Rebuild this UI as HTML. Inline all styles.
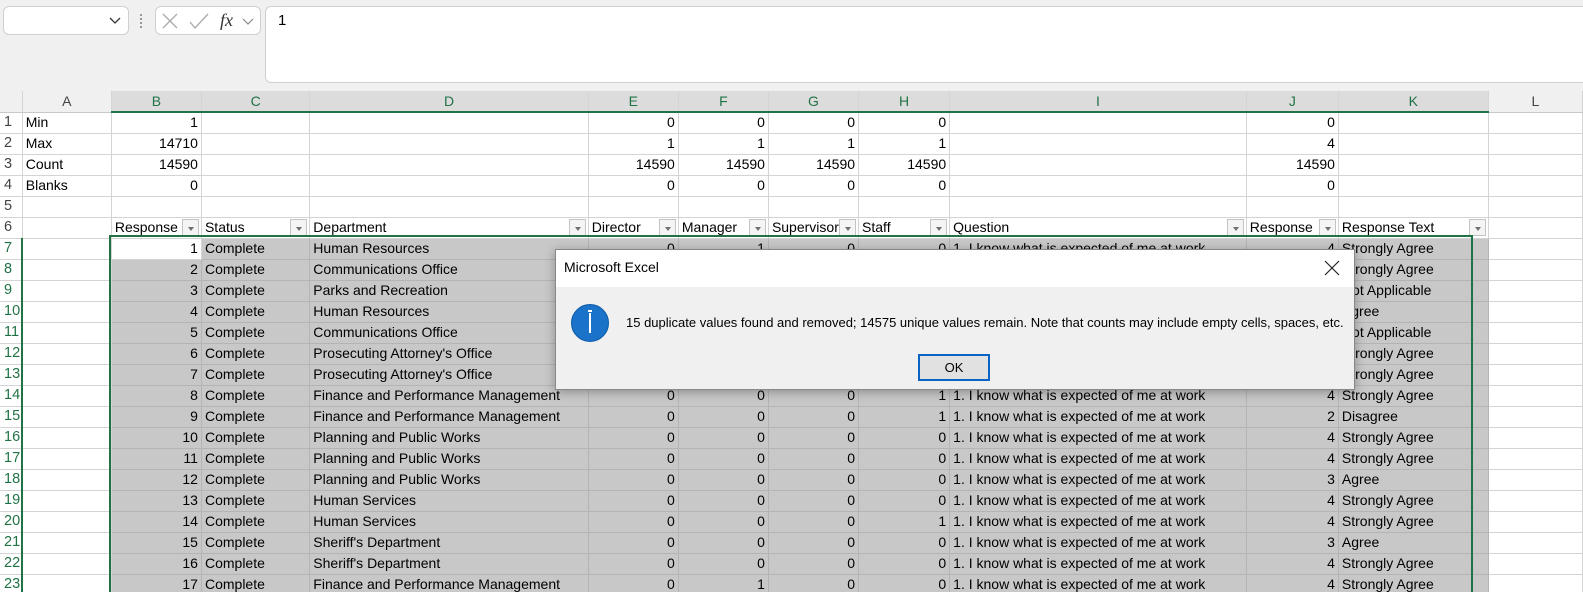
<!DOCTYPE html>
<html><head><meta charset="utf-8">
<style>
*{box-sizing:border-box;margin:0;padding:0}
html,body{width:1583px;height:592px;overflow:hidden}
body{background:#f0f0f0;font-family:"Liberation Sans",sans-serif;position:relative}
.box{position:absolute;background:#fff;border:1px solid #d0d0d0;border-radius:6px}
#grid{position:absolute;left:0;top:91px;width:1583px;border-collapse:collapse;table-layout:fixed;font-size:14px;color:#000}
#grid td{border-right:1px solid #d4d4d4;border-bottom:1px solid #d4d4d4;height:21px;padding:0 3px;white-space:nowrap;overflow:hidden;background:#fff;line-height:19px}
#grid tr.h td{background:#f0f0f0;text-align:center;color:#444;height:21px;border-bottom:1px solid #c8c8c8}
#grid tr.h td.s{background:#dcdcdc;color:#217346;border-bottom:2px solid #217346}
#grid td.rh{color:#444;padding-left:4px;background:#fff;font-size:14.5px}
#grid td.rg{color:#217346;border-right:2px solid #217346}
#grid td.g{background:#c8c8c8;border-right-color:#b4b4b4;border-bottom-color:#b4b4b4}
.r{text-align:right}
.f{position:relative}
.f i{position:absolute;right:2px;top:1px;width:17px;height:17px;border:1px solid #c4c4c4;background:#f4f4f4}
.f i:after{content:"";position:absolute;left:5px;top:7px;border-left:3px solid transparent;border-right:3px solid transparent;border-top:4px solid #707070}
</style></head><body>
<div class="box" style="left:3px;top:6px;width:126px;height:29px"></div>
<svg style="position:absolute;left:108px;top:16px" width="14" height="10"><path d="M2 2 L7 7 L12 2" stroke="#333" stroke-width="1.3" fill="none"/></svg>
<div style="position:absolute;left:140px;top:14px;width:3px;height:14px;border-left:2px dotted #999"></div>
<div class="box" style="left:155px;top:6px;width:106px;height:29px"></div>
<svg style="position:absolute;left:160px;top:10px" width="100" height="22"><path d="M3 4 L17 18 M17 4 L3 18" stroke="#aaa" stroke-width="1.3"/><path d="M30 12 L35 18 L48 4" stroke="#aaa" stroke-width="1.3" fill="none"/><text x="60" y="16" font-family="Liberation Serif" font-style="italic" font-size="18" fill="#333">fx</text><path d="M83 9 L88 14 L93 9" stroke="#888" stroke-width="1.2" fill="none"/></svg>
<div class="box" style="left:265px;top:6px;width:1330px;height:77px"></div>
<div style="position:absolute;left:278px;top:12px;font-size:15px">1</div>

<table id="grid">
<colgroup><col style="width:22px"><col style="width:88px"><col style="width:89px"><col style="width:107px"><col style="width:275px"><col style="width:89px"><col style="width:89px"><col style="width:89px"><col style="width:90px"><col style="width:293px"><col style="width:91px"><col style="width:148px"><col style="width:93px"></colgroup>
<tr class="h"><td style="background:#f0f0f0"></td><td>A</td><td class="s">B</td><td class="s">C</td><td class="s">D</td><td class="s">E</td><td class="s">F</td><td class="s">G</td><td class="s">H</td><td class="s">I</td><td class="s">J</td><td class="s">K</td><td>L</td></tr>
<tr><td class="rh">1</td><td>Min</td><td class="r">1</td><td></td><td></td><td class="r">0</td><td class="r">0</td><td class="r">0</td><td class="r">0</td><td></td><td class="r">0</td><td></td><td></td></tr>
<tr><td class="rh">2</td><td>Max</td><td class="r">14710</td><td></td><td></td><td class="r">1</td><td class="r">1</td><td class="r">1</td><td class="r">1</td><td></td><td class="r">4</td><td></td><td></td></tr>
<tr><td class="rh">3</td><td>Count</td><td class="r">14590</td><td></td><td></td><td class="r">14590</td><td class="r">14590</td><td class="r">14590</td><td class="r">14590</td><td></td><td class="r">14590</td><td></td><td></td></tr>
<tr><td class="rh">4</td><td>Blanks</td><td class="r">0</td><td></td><td></td><td class="r">0</td><td class="r">0</td><td class="r">0</td><td class="r">0</td><td></td><td class="r">0</td><td></td><td></td></tr>
<tr><td class="rh">5</td><td></td><td></td><td></td><td></td><td></td><td></td><td></td><td></td><td></td><td></td><td></td><td></td></tr>
<tr><td class="rh">6</td><td></td><td class="f">Response<i></i></td><td class="f">Status<i></i></td><td class="f">Department<i></i></td><td class="f">Director<i></i></td><td class="f">Manager<i></i></td><td class="f">Supervisor<i></i></td><td class="f">Staff<i></i></td><td class="f">Question<i></i></td><td class="f">Response<i></i></td><td class="f">Response Text<i></i></td><td></td></tr>
<tr><td class="rh rg">7</td><td></td><td class="r">1</td><td class="g">Complete</td><td class="g">Human Resources</td><td class="g r">0</td><td class="g r">1</td><td class="g r">0</td><td class="g r">0</td><td class="g">1. I know what is expected of me at work</td><td class="g r">4</td><td class="g">Strongly Agree</td><td></td></tr>
<tr><td class="rh rg">8</td><td></td><td class="g r">2</td><td class="g">Complete</td><td class="g">Communications Office</td><td class="g r">0</td><td class="g r">0</td><td class="g r">0</td><td class="g r">0</td><td class="g">1. I know what is expected of me at work</td><td class="g r">4</td><td class="g">Strongly Agree</td><td></td></tr>
<tr><td class="rh rg">9</td><td></td><td class="g r">3</td><td class="g">Complete</td><td class="g">Parks and Recreation</td><td class="g r">0</td><td class="g r">0</td><td class="g r">0</td><td class="g r">0</td><td class="g">1. I know what is expected of me at work</td><td class="g r">5</td><td class="g">Not Applicable</td><td></td></tr>
<tr><td class="rh rg">10</td><td></td><td class="g r">4</td><td class="g">Complete</td><td class="g">Human Resources</td><td class="g r">0</td><td class="g r">0</td><td class="g r">0</td><td class="g r">0</td><td class="g">1. I know what is expected of me at work</td><td class="g r">3</td><td class="g">Agree</td><td></td></tr>
<tr><td class="rh rg">11</td><td></td><td class="g r">5</td><td class="g">Complete</td><td class="g">Communications Office</td><td class="g r">0</td><td class="g r">0</td><td class="g r">0</td><td class="g r">0</td><td class="g">1. I know what is expected of me at work</td><td class="g r">5</td><td class="g">Not Applicable</td><td></td></tr>
<tr><td class="rh rg">12</td><td></td><td class="g r">6</td><td class="g">Complete</td><td class="g">Prosecuting Attorney's Office</td><td class="g r">0</td><td class="g r">0</td><td class="g r">0</td><td class="g r">0</td><td class="g">1. I know what is expected of me at work</td><td class="g r">4</td><td class="g">Strongly Agree</td><td></td></tr>
<tr><td class="rh rg">13</td><td></td><td class="g r">7</td><td class="g">Complete</td><td class="g">Prosecuting Attorney's Office</td><td class="g r">0</td><td class="g r">0</td><td class="g r">0</td><td class="g r">0</td><td class="g">1. I know what is expected of me at work</td><td class="g r">4</td><td class="g">Strongly Agree</td><td></td></tr>
<tr><td class="rh rg">14</td><td></td><td class="g r">8</td><td class="g">Complete</td><td class="g">Finance and Performance Management</td><td class="g r">0</td><td class="g r">0</td><td class="g r">0</td><td class="g r">1</td><td class="g">1. I know what is expected of me at work</td><td class="g r">4</td><td class="g">Strongly Agree</td><td></td></tr>
<tr><td class="rh rg">15</td><td></td><td class="g r">9</td><td class="g">Complete</td><td class="g">Finance and Performance Management</td><td class="g r">0</td><td class="g r">0</td><td class="g r">0</td><td class="g r">1</td><td class="g">1. I know what is expected of me at work</td><td class="g r">2</td><td class="g">Disagree</td><td></td></tr>
<tr><td class="rh rg">16</td><td></td><td class="g r">10</td><td class="g">Complete</td><td class="g">Planning and Public Works</td><td class="g r">0</td><td class="g r">0</td><td class="g r">0</td><td class="g r">0</td><td class="g">1. I know what is expected of me at work</td><td class="g r">4</td><td class="g">Strongly Agree</td><td></td></tr>
<tr><td class="rh rg">17</td><td></td><td class="g r">11</td><td class="g">Complete</td><td class="g">Planning and Public Works</td><td class="g r">0</td><td class="g r">0</td><td class="g r">0</td><td class="g r">0</td><td class="g">1. I know what is expected of me at work</td><td class="g r">4</td><td class="g">Strongly Agree</td><td></td></tr>
<tr><td class="rh rg">18</td><td></td><td class="g r">12</td><td class="g">Complete</td><td class="g">Planning and Public Works</td><td class="g r">0</td><td class="g r">0</td><td class="g r">0</td><td class="g r">0</td><td class="g">1. I know what is expected of me at work</td><td class="g r">3</td><td class="g">Agree</td><td></td></tr>
<tr><td class="rh rg">19</td><td></td><td class="g r">13</td><td class="g">Complete</td><td class="g">Human Services</td><td class="g r">0</td><td class="g r">0</td><td class="g r">0</td><td class="g r">0</td><td class="g">1. I know what is expected of me at work</td><td class="g r">4</td><td class="g">Strongly Agree</td><td></td></tr>
<tr><td class="rh rg">20</td><td></td><td class="g r">14</td><td class="g">Complete</td><td class="g">Human Services</td><td class="g r">0</td><td class="g r">0</td><td class="g r">0</td><td class="g r">1</td><td class="g">1. I know what is expected of me at work</td><td class="g r">4</td><td class="g">Strongly Agree</td><td></td></tr>
<tr><td class="rh rg">21</td><td></td><td class="g r">15</td><td class="g">Complete</td><td class="g">Sheriff's Department</td><td class="g r">0</td><td class="g r">0</td><td class="g r">0</td><td class="g r">0</td><td class="g">1. I know what is expected of me at work</td><td class="g r">3</td><td class="g">Agree</td><td></td></tr>
<tr><td class="rh rg">22</td><td></td><td class="g r">16</td><td class="g">Complete</td><td class="g">Sheriff's Department</td><td class="g r">0</td><td class="g r">0</td><td class="g r">0</td><td class="g r">0</td><td class="g">1. I know what is expected of me at work</td><td class="g r">4</td><td class="g">Strongly Agree</td><td></td></tr>
<tr><td class="rh rg">23</td><td></td><td class="g r">17</td><td class="g">Complete</td><td class="g">Finance and Performance Management</td><td class="g r">0</td><td class="g r">1</td><td class="g r">0</td><td class="g r">0</td><td class="g">1. I know what is expected of me at work</td><td class="g r">4</td><td class="g">Strongly Agree</td><td></td></tr>
</table>
<div style="position:absolute;left:109px;top:235px;width:1364px;height:370px;border:2px solid #217346"></div>

<div style="position:absolute;left:555px;top:249px;width:800px;height:141px;background:#f0f0f0;border:1px solid #888;box-shadow:0 2px 10px rgba(0,0,0,.3)">
 <div style="height:37px;background:#fff;font-size:14px;padding:9px 0 0 8px;color:#000">Microsoft Excel</div>
 <svg style="position:absolute;right:14px;top:10px" width="16" height="16"><path d="M1 1 L15 15 M15 1 L1 15" stroke="#222" stroke-width="1.2"/></svg>
 <div style="position:absolute;left:15px;top:54px;width:38px;height:38px;border-radius:50%;background:#1a73c8;border:1px solid #0c5aa6"></div>
 <div style="position:absolute;left:33px;top:63px;width:2px;height:20px;background:#fff"></div>
 <div style="position:absolute;left:32px;top:60px;width:4px;height:2px;background:#fff"></div>
 <div style="position:absolute;left:70px;top:65px;font-size:13px;white-space:nowrap">15 duplicate values found and removed; 14575 unique values remain. Note that counts may include empty cells, spaces, etc.</div>
 <div style="position:absolute;left:362px;top:104px;width:72px;height:27px;border:2px solid #0a64c4;background:#e1e1e1;font-size:13px;text-align:center;line-height:23px">OK</div>
</div>
</body></html>
